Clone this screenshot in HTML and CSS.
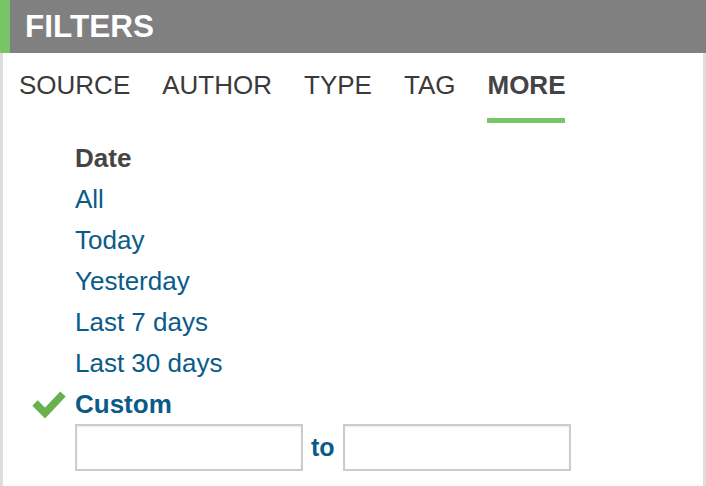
FILE: index.html
```html
<!DOCTYPE html>
<html lang="en">
<head>
    <meta charset="UTF-8">
    <meta name="viewport" content="width=device-width, initial-scale=1.0">
    <title>Filters</title>
    <link rel="stylesheet" href="styles.css">
</head>
<body>
    <div class="panel">
        <div class="panel-head">
            <h2>FILTERS</h2>
        </div>
        <div class="panel-body">
            <nav class="tabs">
                <a class="tab" href="#">SOURCE</a>
                <a class="tab" href="#">AUTHOR</a>
                <a class="tab" href="#">TYPE</a>
                <a class="tab" href="#">TAG</a>
                <a class="tab active" href="#">MORE</a>
            </nav>

            <div class="filter-group">
                <div class="group-title">Date</div>
                <ul class="options">
                    <li><span class="mark"></span><a href="#">All</a></li>
                    <li><span class="mark"></span><a href="#">Today</a></li>
                    <li><span class="mark"></span><a href="#">Yesterday</a></li>
                    <li><span class="mark"></span><a href="#">Last 7 days</a></li>
                    <li><span class="mark"></span><a href="#">Last 30 days</a></li>
                    <li class="selected">
                        <span class="mark">
                            <svg width="34" height="30" viewBox="0 0 34 30">
                                <polyline points="3,13 13,23 31,4" fill="none" stroke="#69b04f" stroke-width="7.5" stroke-linejoin="miter"/>
                            </svg>
                        </span>
                        <a href="#">Custom</a>
                    </li>
                </ul>
                <div class="range">
                    <input type="text">
                    <span class="range-sep">to</span>
                    <input type="text">
                </div>
            </div>
        </div>
    </div>
</body>
</html>
```

FILE: styles.css
```css
body {
    margin: 0;
    padding: 0;
    font-family: 'Liberation Sans', Arial, sans-serif;
    background: #fff;
}

.panel {
    display: flex;
    flex-direction: column;
    min-height: 100vh;
}

.panel-head {
    height: 53px;
    background: #808080;
    border-left: 10px solid #7ac468;
    padding-left: 15px;
}

.panel-head h2 {
    margin: 0;
    font-size: 31.5px;
    line-height: 53px;
    font-weight: bold;
    color: #fff;
}

.panel-body {
    flex: 1;
    border-left: 3px solid #dddddd;
    border-right: 3px solid #dddddd;
}

.tabs {
    display: flex;
    gap: 32px;
    padding: 17px 0 0 16px;
}

.tab {
    font-size: 26px;
    line-height: 30px;
    color: #3a3a3a;
    text-decoration: none;
    padding-bottom: 18px;
    border-bottom: 5px solid transparent;
}

.tab.active {
    font-weight: bold;
    color: #444;
    border-bottom-color: #7ac468;
}

.filter-group {
    margin: 15px 0 0 29px;
}

.group-title {
    padding-left: 43px;
    font-size: 26px;
    line-height: 41px;
    font-weight: bold;
    color: #444;
}

.options {
    list-style: none;
    margin: 0;
    padding: 0;
}

.options li {
    display: flex;
    align-items: center;
    height: 41px;
}

.mark {
    width: 43px;
    display: flex;
    align-items: center;
}

.options a {
    font-size: 26px;
    line-height: 41px;
    color: #0a5b88;
    text-decoration: none;
}

.options .selected a {
    font-weight: bold;
}

.range {
    display: flex;
    align-items: center;
    padding-left: 43px;
    margin-top: -1px;
}

.range input {
    width: 228px;
    height: 47px;
    box-sizing: border-box;
    margin: 0;
    border: 2px solid #cccccc;
    box-shadow: inset 0 1px 2px rgba(0, 0, 0, 0.08);
    font-size: 20px;
}

.range-sep {
    font-size: 25px;
    font-weight: bold;
    color: #0a5b88;
    margin: 0 8px 0 8px;
}
```
